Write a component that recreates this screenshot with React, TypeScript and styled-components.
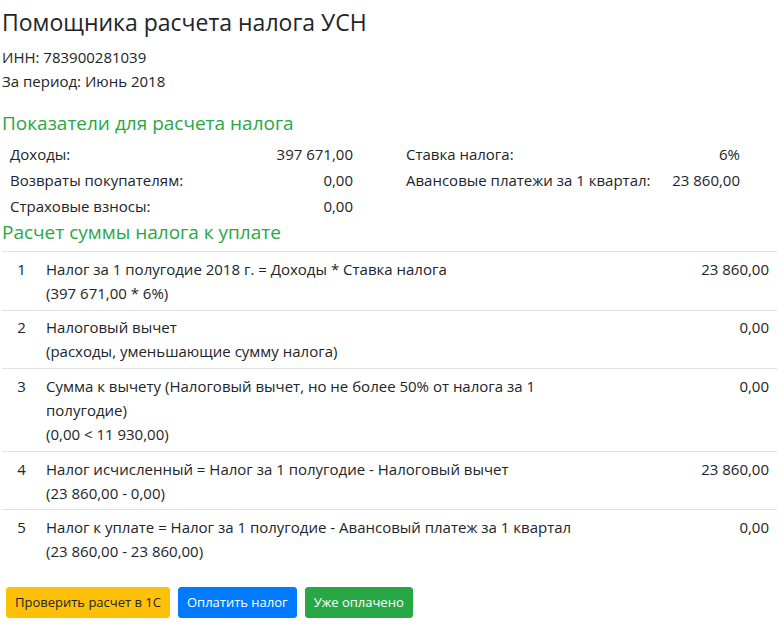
import React from "react";
import styled, { createGlobalStyle } from "styled-components";

const GlobalStyle = createGlobalStyle`
  html, body { margin: 0; padding: 0; background: #fff; }
  body {
    font-family: "Open Sans", "Noto Sans", sans-serif;
    font-size: 15px;
    line-height: 24px;
    color: #212529;
  }
  * { box-sizing: border-box; }
`;

const Page = styled.div`
  padding: 8px 7px 12px 2px;
`;

const Title = styled.h1`
  margin: 0 0 8px;
  font-size: 23px;
  font-weight: 400;
  line-height: 29px;
`;

const InfoLine = styled.div`
  line-height: 24px;
`;

const SectionTitle = styled.h2<{ $top: number; $bottom: number }>`
  margin: ${(p) => p.$top}px 0 ${(p) => p.$bottom}px;
  font-size: 19px;
  font-weight: 400;
  line-height: 24px;
  color: #28a745;
`;

const Indicators = styled.div`
  display: flex;
  padding-left: 8px;
  gap: 53px;
`;

const IndicatorColumn = styled.div<{ $width: number }>`
  width: ${(p) => p.$width}px;
`;

const IndicatorRow = styled.div`
  display: flex;
  justify-content: space-between;
  height: 26px;
  align-items: center;
`;

const Table = styled.div`
  border-top: 1px solid #dee2e6;
`;

const Row = styled.div`
  display: grid;
  grid-template-columns: 39px 560px 1fr;
  border-bottom: 1px solid #dee2e6;
  padding: 4.8px 0;
  &:last-child { border-bottom: none; }
`;

const Num = styled.div`
  text-align: center;
`;

const Desc = styled.div`
  padding: 0 5px;
`;

const Value = styled.div`
  text-align: right;
  padding-right: 8px;
`;

const Buttons = styled.div`
  display: flex;
  gap: 8px;
  margin: 19px 0 0 4px;
`;

const Button = styled.button<{ $bg: string; $fg: string }>`
  height: 31px;
  padding: 0 8px;
  border: 1px solid ${(p) => p.$bg};
  background: ${(p) => p.$bg};
  color: ${(p) => p.$fg};
  border-radius: 3px;
  font-family: inherit;
  font-size: 13px;
  line-height: 21px;
  cursor: pointer;
`;

const rows = [
  { n: 1, lines: ["Налог за 1 полугодие 2018 г. = Доходы * Ставка налога", "(397 671,00 * 6%)"], v: "23 860,00" },
  { n: 2, lines: ["Налоговый вычет", "(расходы, уменьшающие сумму налога)"], v: "0,00" },
  { n: 3, lines: ["Сумма к вычету (Налоговый вычет, но не более 50% от налога за 1 полугодие)", "(0,00 < 11 930,00)"], v: "0,00" },
  { n: 4, lines: ["Налог исчисленный = Налог за 1 полугодие - Налоговый вычет", "(23 860,00 - 0,00)"], v: "23 860,00" },
  { n: 5, lines: ["Налог к уплате = Налог за 1 полугодие - Авансовый платеж за 1 квартал", "(23 860,00 - 23 860,00)"], v: "0,00" },
];

export default function App() {
  return (
    <>
      <GlobalStyle />
      <Page>
        <Title>Помощника расчета налога УСН</Title>
        <InfoLine>ИНН: 783900281039</InfoLine>
        <InfoLine>За период: Июнь 2018</InfoLine>
        <SectionTitle $top={18} $bottom={6}>Показатели для расчета налога</SectionTitle>
        <Indicators>
          <IndicatorColumn $width={343}>
            <IndicatorRow><span>Доходы:</span><span>397 671,00</span></IndicatorRow>
            <IndicatorRow><span>Возвраты покупателям:</span><span>0,00</span></IndicatorRow>
            <IndicatorRow><span>Страховые взносы:</span><span>0,00</span></IndicatorRow>
          </IndicatorColumn>
          <IndicatorColumn $width={334}>
            <IndicatorRow><span>Ставка налога:</span><span>6%</span></IndicatorRow>
            <IndicatorRow><span>Авансовые платежи за 1 квартал:</span><span>23 860,00</span></IndicatorRow>
          </IndicatorColumn>
        </Indicators>
        <SectionTitle $top={1} $bottom={7}>Расчет суммы налога к уплате</SectionTitle>
        <Table>
          {rows.map((r) => (
            <Row key={r.n}>
              <Num>{r.n}</Num>
              <Desc>
                {r.lines.map((l, i) => (
                  <div key={i}>{l}</div>
                ))}
              </Desc>
              <Value>{r.v}</Value>
            </Row>
          ))}
        </Table>
        <Buttons>
          <Button $bg="#ffc107" $fg="#212529">Проверить расчет в 1С</Button>
          <Button $bg="#007bff" $fg="#fff">Оплатить налог</Button>
          <Button $bg="#28a745" $fg="#fff">Уже оплачено</Button>
        </Buttons>
      </Page>
    </>
  );
}
